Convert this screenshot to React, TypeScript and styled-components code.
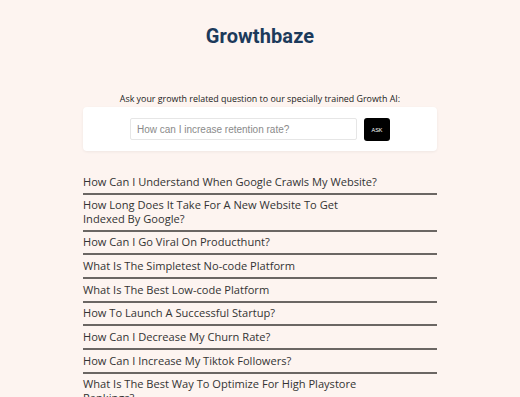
import React from "react";
import styled, { createGlobalStyle } from "styled-components";

const Global = createGlobalStyle`
  html, body { margin: 0; padding: 0; background: #fdf4f0; }
  body { font-family: "Open Sans", "Noto Sans", sans-serif; }
`;

const Page = styled.div`
  width: 354px;
  margin: 0 auto;
  padding-top: 24px;
`;

const Title = styled.h1`
  margin: 0;
  font-family: "Roboto", "Inter", sans-serif;
  font-weight: 700;
  font-size: 20px;
  line-height: 24px;
  text-align: center;
  color: #1c3a5b;
  letter-spacing: 0.1px;
`;

const Subtitle = styled.p`
  margin: 45px 0 0;
  font-size: 8.9px;
  line-height: 12px;
  text-align: center;
  color: #222;
`;

const Card = styled.form`
  margin-top: 2px;
  background: #fff;
  border-radius: 4px;
  box-shadow: 0 1px 3px rgba(0, 0, 0, 0.06);
  padding: 10px 0;
  display: flex;
  justify-content: center;
  align-items: center;
  gap: 7px;
`;

const Input = styled.input`
  box-sizing: border-box;
  width: 227px;
  height: 22px;
  border: 1px solid #e6e6e6;
  border-radius: 2px;
  padding: 0 6px;
  font-family: "Liberation Sans", Arial, sans-serif;
  font-size: 10px;
  color: #333;
  outline: none;
  &::placeholder { color: #8a8a8a; }
`;

const AskButton = styled.button`
  box-sizing: border-box;
  width: 26px;
  height: 23px;
  margin-top: 1px;
  border: none;
  border-radius: 3px;
  background: #000;
  color: #fff;
  font-family: "Liberation Sans", Arial, sans-serif;
  font-size: 5.5px;
  padding: 0;
  cursor: pointer;
`;

const List = styled.ul`
  list-style: none;
  margin: 20px 0 0;
  padding: 0;
`;

const Item = styled.li`
  padding: 3.6px 0 4.74px;
  border-bottom: 2px solid #6b6663;
`;

const Question = styled.a`
  display: block;
  max-width: 296px;
  font-size: 11.1px;
  line-height: 13.33px;
  color: #333;
  text-decoration: none;
`;

const questions = [
  "How Can I Understand When Google Crawls My Website?",
  "How Long Does It Take For A New Website To Get Indexed By Google?",
  "How Can I Go Viral On Producthunt?",
  "What Is The Simpletest No-code Platform",
  "What Is The Best Low-code Platform",
  "How To Launch A Successful Startup?",
  "How Can I Decrease My Churn Rate?",
  "How Can I Increase My Tiktok Followers?",
  "What Is The Best Way To Optimize For High Playstore Rankings?",
];

export default function App() {
  return (
    <>
      <Global />
      <Page>
        <Title>Growthbaze</Title>
        <Subtitle>Ask your growth related question to our specially trained Growth AI:</Subtitle>
        <Card onSubmit={(e) => e.preventDefault()}>
          <Input placeholder="How can I increase retention rate?" />
          <AskButton type="submit">ASK</AskButton>
        </Card>
        <List>
          {questions.map((q) => (
            <Item key={q}>
              <Question href="#">{q}</Question>
            </Item>
          ))}
        </List>
      </Page>
    </>
  );
}
